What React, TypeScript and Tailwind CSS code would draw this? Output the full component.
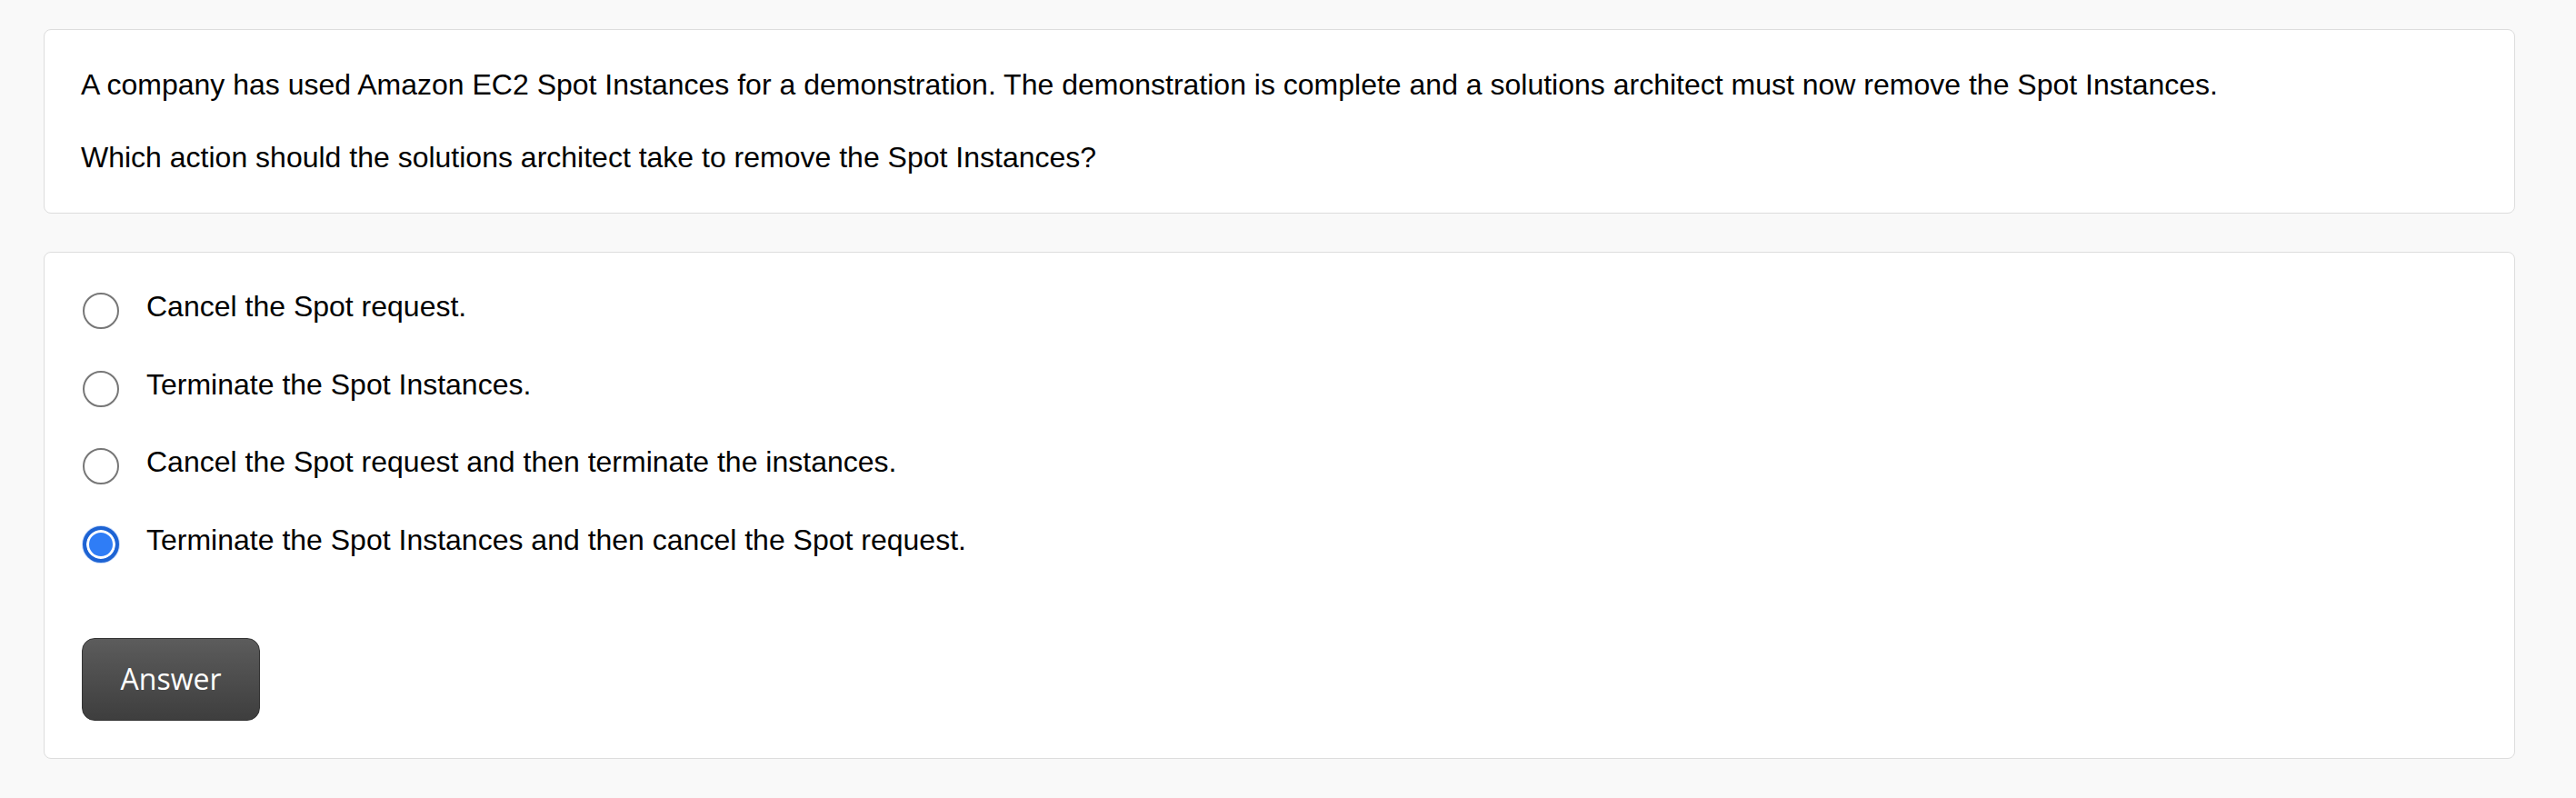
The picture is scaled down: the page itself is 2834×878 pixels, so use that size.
const options = [
  "Cancel the Spot request.",
  "Terminate the Spot Instances.",
  "Cancel the Spot request and then terminate the instances.",
  "Terminate the Spot Instances and then cancel the Spot request.",
];

function Radio({ checked }: { checked: boolean }) {
  if (checked) {
    return (
      <span className="mt-[3px] w-10 h-10 shrink-0 rounded-full border-[4px] border-[#1d63d3] bg-[#2f7df6] shadow-[inset_0_0_0_3px_#ffffff,0_0_0_1px_#c7dafb]" />
    );
  }
  return <span className="mt-[3px] w-10 h-10 shrink-0 rounded-full border-2 border-[#777777] bg-white" />;
}

export default function App() {
  const selected = 3;

  return (
    <div className="min-h-screen bg-[#f9f9f9] pt-8 pb-[42px] pl-12 pr-[67px] font-['Liberation_Sans',Arial,sans-serif] text-[32px] leading-[36px] text-black">
      {/* Question */}
      <div className="bg-white border border-[#dddddd] rounded-lg px-10 pt-[42px] pb-[43px]">
        <p>
          A company has used Amazon EC2 Spot Instances for a demonstration. The demonstration is complete and a solutions
          architect must now remove the Spot Instances.
        </p>
        <p className="mt-[44px]">Which action should the solutions architect take to remove the Spot Instances?</p>
      </div>

      {/* Choices */}
      <div className="mt-[42px] bg-white border border-[#dddddd] rounded-lg px-[42px] pt-[41px] pb-[41px]">
        <div className="flex flex-col gap-[42.5px]">
          {options.map((opt, i) => (
            <label key={opt} className="flex items-start gap-[30px]">
              <Radio checked={i === selected} />
              <span>{opt}</span>
            </label>
          ))}
        </div>

        <button className="mt-[83px] h-[91px] w-[196px] -ml-[1px] rounded-[14px] border border-[#333333] bg-gradient-to-b from-[#5c5c5c] to-[#3e3e3e] font-['Open_Sans',sans-serif] font-medium text-[32px] text-white">
          Answer
        </button>
      </div>
    </div>
  );
}
